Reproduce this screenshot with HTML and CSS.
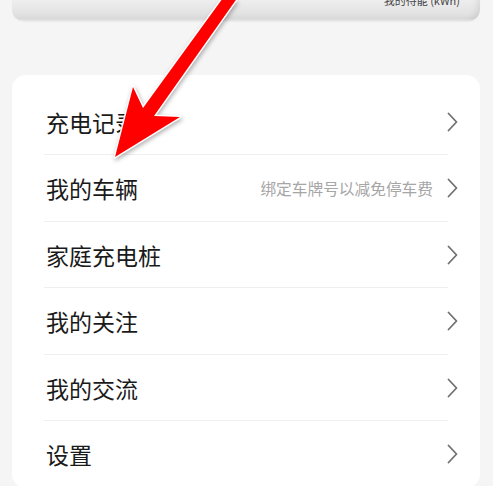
FILE: index.html
```html
<!DOCTYPE html>
<html lang="zh-CN">
<head>
<meta charset="utf-8">
<link rel="stylesheet" href="styles.css">
</head>
<body>
<div class="page">
  <div class="stat-card">
    <div class="stat-label">我的待能 (kWh)</div>
  </div>
  <div class="menu-card">
    <div class="row"><span class="label">充电记录</span><span class="chev"><svg width="11" height="20" viewBox="0 0 11 20"><path d="M1.5 1.5 L9.5 10 L1.5 18.5" fill="none" stroke="#707070" stroke-width="1.8" stroke-linecap="round" stroke-linejoin="round"/></svg></span></div>
    <div class="row"><span class="label">我的车辆</span><span class="hint">绑定车牌号以减免停车费</span><span class="chev"><svg width="11" height="20" viewBox="0 0 11 20"><path d="M1.5 1.5 L9.5 10 L1.5 18.5" fill="none" stroke="#707070" stroke-width="1.8" stroke-linecap="round" stroke-linejoin="round"/></svg></span></div>
    <div class="row"><span class="label">家庭充电桩</span><span class="chev"><svg width="11" height="20" viewBox="0 0 11 20"><path d="M1.5 1.5 L9.5 10 L1.5 18.5" fill="none" stroke="#707070" stroke-width="1.8" stroke-linecap="round" stroke-linejoin="round"/></svg></span></div>
    <div class="row"><span class="label">我的关注</span><span class="chev"><svg width="11" height="20" viewBox="0 0 11 20"><path d="M1.5 1.5 L9.5 10 L1.5 18.5" fill="none" stroke="#707070" stroke-width="1.8" stroke-linecap="round" stroke-linejoin="round"/></svg></span></div>
    <div class="row"><span class="label">我的交流</span><span class="chev"><svg width="11" height="20" viewBox="0 0 11 20"><path d="M1.5 1.5 L9.5 10 L1.5 18.5" fill="none" stroke="#707070" stroke-width="1.8" stroke-linecap="round" stroke-linejoin="round"/></svg></span></div>
    <div class="row last"><span class="label">设置</span><span class="chev"><svg width="11" height="20" viewBox="0 0 11 20"><path d="M1.5 1.5 L9.5 10 L1.5 18.5" fill="none" stroke="#707070" stroke-width="1.8" stroke-linecap="round" stroke-linejoin="round"/></svg></span></div>
  </div>
  <svg class="arrow" width="493" height="200" viewBox="0 0 493 200">
    <polygon points="236,-20 250,-20 154,116 180,117 115,157 133,87 143,108" fill="#ff0000" stroke="#ffffff" stroke-width="3" stroke-linejoin="round" paint-order="stroke"/>
  </svg>
</div>
</body>
</html>
```

FILE: styles.css
```css
* { box-sizing: border-box; }
html, body {
  margin: 0;
  padding: 0;
  background: #f5f5f5;
  overflow: hidden;
}
body {
  font-family: "Noto Sans CJK SC", "Noto Sans", sans-serif;
}
.page {
  position: relative;
  width: 493px;
  height: 486px;
  overflow: hidden;
}
.stat-card {
  margin: -39px 13px 0 12px;
  height: 60px;
  border-radius: 12px;
  background: linear-gradient(to bottom, #f6f6f6 0%, #f0f0f0 62%, #e2e2e2 88%, #d9d9d9 96%, #e9e9e9 100%);
  box-shadow: inset -8px 0 8px -6px rgba(0,0,0,0.10), 0 1px 1px rgba(0,0,0,0.05);
  padding: 33px 20px 0 0;
  text-align: right;
}
.stat-label {
  font-size: 11px;
  line-height: 13px;
  color: #444;
}
.menu-card {
  margin: 54px 13px 0 12px;
  background: #ffffff;
  border-radius: 14px;
  padding-top: 13.5px;
}
.row {
  display: flex;
  align-items: center;
  height: 66.5px;
  padding: 0 22px 0 34px;
  background: linear-gradient(#efefef, #efefef) no-repeat left 32px bottom / calc(100% - 64px) 1px;
}
.row.last { background: none; }
.label {
  flex: 1;
  font-size: 23px;
  line-height: 30px;
  color: #1a1a1a;
}
.hint {
  font-size: 15.7px;
  color: #a6a6a6;
  margin-right: 14px;
}
.chev {
  display: flex;
  width: 11px;
  height: 20px;
}
.arrow {
  position: absolute;
  left: 0;
  top: 0;
  filter: drop-shadow(1px 2px 2px rgba(0,0,0,0.3));
}
```
